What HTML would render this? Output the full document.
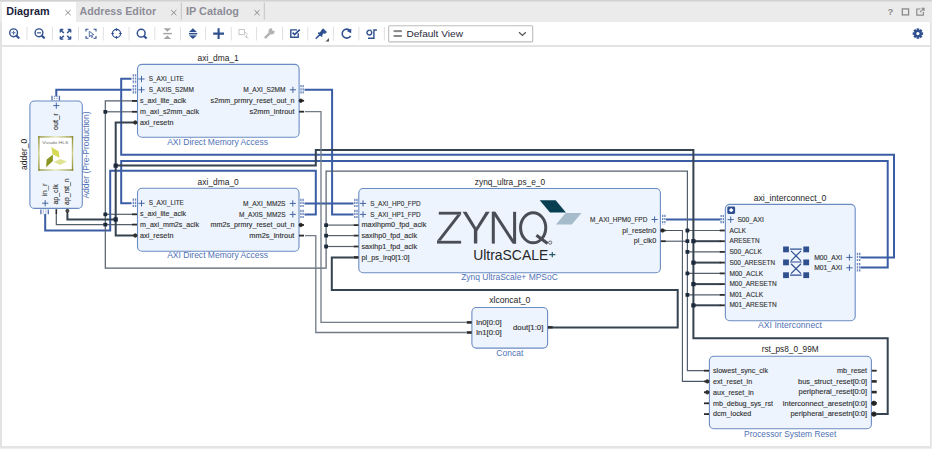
<!DOCTYPE html><html><head><meta charset="utf-8"><style>html,body{margin:0;padding:0;background:#fff;width:932px;height:449px;overflow:hidden}svg{display:block}text{font-family:"Liberation Sans",sans-serif;white-space:pre}</style></head><body>
<svg width="932" height="449" viewBox="0 0 932 449">
<rect x="0" y="0" width="932" height="449" fill="#e3e3e3"/>
<rect x="0" y="0" width="932" height="22" fill="#ebebeb"/>
<rect x="0" y="0" width="932" height="1.5" fill="#d2d2d2"/>
<rect x="2" y="2" width="74" height="20" fill="#ffffff"/>
<rect x="2" y="22" width="928" height="23" fill="#ffffff"/>
<rect x="2" y="47" width="928" height="399" fill="#ffffff"/>
<rect x="0" y="447.8" width="932" height="1.2" fill="#eeeeee"/><rect x="931.2" y="22" width="0.8" height="427" fill="#ececec"/>
<text x="6.30" y="14.70" font-size="10.20" fill="#1c1c3c" text-anchor="start" textLength="43.20" lengthAdjust="spacingAndGlyphs" font-weight="bold">Diagram</text>
<text x="79.50" y="14.70" font-size="10.20" fill="#8d8d98" text-anchor="start" textLength="76.60" lengthAdjust="spacingAndGlyphs" font-weight="bold">Address Editor</text>
<text x="186.00" y="14.70" font-size="10.20" fill="#8d8d98" text-anchor="start" textLength="53.00" lengthAdjust="spacingAndGlyphs" font-weight="bold">IP Catalog</text>
<path d="M65.4 10.0L70.6 15.2M70.6 10.0L65.4 15.2" stroke="#858585" stroke-width="0.95"/>
<path d="M171.20000000000002 10.0L176.4 15.2M176.4 10.0L171.20000000000002 15.2" stroke="#858585" stroke-width="0.95"/>
<path d="M254.4 10.0L259.6 15.2M259.6 10.0L254.4 15.2" stroke="#858585" stroke-width="0.95"/>
<rect x="180.8" y="2.5" width="1" height="17" fill="#c4c4c4"/>
<rect x="263.8" y="2.5" width="1" height="17" fill="#c4c4c4"/>
<text x="887.5" y="15.4" font-size="9.5" fill="#8a8a8a" font-weight="bold">?</text>
<rect x="902.3" y="8.9" width="6.3" height="6.0" fill="none" stroke="#8a8a8a" stroke-width="1.3"/>
<path d="M920.5 9H916.8V15.2H923.3V11.8" fill="none" stroke="#8a8a8a" stroke-width="1.2"/><path d="M920 12.2L924 8.4M921.5 8.3H924.1V10.9" fill="none" stroke="#8a8a8a" stroke-width="1.1"/>
<rect x="26.5" y="27" width="1" height="13.5" fill="#e0e0e0"/>
<rect x="51.9" y="27" width="1" height="13.5" fill="#e0e0e0"/>
<rect x="78.0" y="27" width="1" height="13.5" fill="#e0e0e0"/>
<rect x="102.8" y="27" width="1" height="13.5" fill="#e0e0e0"/>
<rect x="128.5" y="27" width="1" height="13.5" fill="#e0e0e0"/>
<rect x="154.3" y="27" width="1" height="13.5" fill="#e0e0e0"/>
<rect x="180.0" y="27" width="1" height="13.5" fill="#e0e0e0"/>
<rect x="205.1" y="27" width="1" height="13.5" fill="#e0e0e0"/>
<rect x="230.8" y="27" width="1" height="13.5" fill="#e0e0e0"/>
<rect x="256.1" y="27" width="1" height="13.5" fill="#e0e0e0"/>
<rect x="282.1" y="27" width="1" height="13.5" fill="#e0e0e0"/>
<rect x="307.3" y="27" width="1" height="13.5" fill="#e0e0e0"/>
<rect x="332.9" y="27" width="1" height="13.5" fill="#e0e0e0"/>
<rect x="358.4" y="27" width="1" height="13.5" fill="#e0e0e0"/>
<rect x="383.9" y="27" width="1" height="13.5" fill="#e0e0e0"/>
<g fill="none" stroke="#2f4f8f" stroke-width="1.4"><circle cx="13.6" cy="32.8" r="3.9"/><path d="M16.5 35.7L18.6 37.8" stroke-width="2.1" stroke-linecap="round"/><path d="M11.6 32.8H15.6M13.6 30.8V34.8" stroke-width="1.1" opacity="0.8"/></g>
<g fill="none" stroke="#2f4f8f" stroke-width="1.4"><circle cx="39.0" cy="32.8" r="3.9"/><path d="M41.9 35.7L44.0 37.8" stroke-width="2.1" stroke-linecap="round"/><path d="M37.0 32.8H41.0" stroke-width="1.4" opacity="0.8"/></g>
<g fill="none" stroke="#2f4f8f" stroke-width="1.5"><path d="M60.5 29.7L63.8 33M70.5 29.7L67.2 33M60.5 39L63.8 35.7M70.5 39L67.2 35.7"/><path d="M60.3 29.5h3M60.3 29.5v3M70.7 29.5h-3M70.7 29.5v3M60.3 39.2h3M60.3 39.2v-3M70.7 39.2h-3M70.7 39.2v-3" stroke-width="1.3"/></g>
<g fill="none" stroke="#2f4f8f" stroke-width="1.1"><path d="M86 31.5V29.3H88.5M93.5 29.3H96V31.5M86 36V38.3H88.5M93.5 38.3H96V36"/><path d="M89.3 31.3L93.8 34.7L91.6 35.1L92.6 37.1L91.6 37.5L90.7 35.5L89.3 36.8Z" stroke-width="0.8"/></g>
<g fill="none" stroke="#2f4f8f" stroke-width="1.2"><circle cx="116.5" cy="33.5" r="4.1"/><path d="M116.5 28.3V30.9M116.5 36.1V38.7M111.3 33.5H113.9M119.1 33.5H121.7"/></g>
<g fill="none" stroke="#2f4f8f" stroke-width="1.5"><circle cx="141.2" cy="33.2" r="3.9"/><path d="M144 36.0L146.6 38.6" stroke-width="2.1"/></g>
<g fill="#a4a4a4"><path d="M163.6 28.3H171.1L167.35 31.8Z"/><rect x="163.2" y="32.9" width="8.7" height="1.4"/><path d="M163.6 39.0H171.1L167.35 35.5Z"/></g>
<g fill="#2f4f8f"><path d="M189.0 31.9H196.8L192.9 28.3Z"/><rect x="188.9" y="32.9" width="8.3" height="1.4"/><path d="M189.0 35.6H196.8L192.9 39.1Z"/><rect x="189.2" y="34.5" width="7.7" height="0.9" opacity="0.45"/></g>
<path d="M213.2 33.6H224M218.6 28.3V38.9" stroke="#2f4f8f" stroke-width="2.1"/>
<g fill="none" stroke="#c8c8c8" stroke-width="1"><rect x="239" y="29.5" width="5.5" height="5.2"/><path d="M245 32L247.8 34.6M246.5 35V37.8M245 36.5L248.5 38.3"/></g>
<g><path d="M265.6 37.3L270.6 32.3" stroke="#b4b4b4" stroke-width="2.6" stroke-linecap="round"/><circle cx="271.6" cy="31.3" r="3.1" fill="#b4b4b4"/><circle cx="273.7" cy="29.2" r="1.7" fill="#fff"/></g>
<g fill="none" stroke="#2f4f8f" stroke-width="1.4"><path d="M298.2 33.2V37.3H290.8V29.9H297"/><path d="M292.6 32.6L294.6 34.5L299.8 29.6" stroke-width="1.7"/></g>
<g fill="#2f4f8f" stroke="#2f4f8f"><path d="M316.2 38.2L320.2 34.4" stroke-width="1.5" stroke-linecap="round"/><path d="M318.3 32.6L322.2 36.5" stroke-width="1.6"/><path d="M319.6 33.6L322.2 31.2L323.5 32.4L321.1 35Z" stroke-width="1.6"/><path d="M321.6 30.3L323.1 28.8L326.4 32.1L324.9 33.6Z" stroke-width="1"/></g><path d="M329 37.9V41.5H325.4Z" fill="#555"/>
<g fill="none" stroke="#2f4f8f" stroke-width="1.6"><path d="M350.2 30.8A4.5 4.5 0 1 0 350.6 35.9"/></g><path d="M346.8 30.9L351.3 28.8L351.2 33.3Z" fill="#2f4f8f"/>
<g fill="none" stroke="#2f4f8f" stroke-width="1.4"><path d="M371.3 31.2A2.4 2.4 0 1 1 369.6 30.2"/><path d="M376.9 30H373.9V38.2H368" /></g><path d="M369 30.6L371.2 29.3L371.6 31.8Z" fill="#2f4f8f"/>
<rect x="388.7" y="25.7" width="144.0" height="16.2" rx="1" fill="#fff" stroke="#bdbdbd" stroke-width="1.1"/>
<g fill="#8a8a8a"><rect x="393.6" y="30.1" width="8.3" height="2.0"/><rect x="393.6" y="35.0" width="8.3" height="2.0"/></g>
<text x="406.4" y="36.8" font-size="9.5" fill="#2a2a3a" textLength="56.6" lengthAdjust="spacingAndGlyphs">Default View</text>
<path d="M519 32.2L522.4 35.4L525.8 32.2" fill="none" stroke="#555" stroke-width="1.3"/>
<g transform="translate(917.9 33.6)"><circle r="3.6" fill="#2f4f8f"/><g fill="#2f4f8f"><rect x="-1.3" y="-5.2" width="2.6" height="2.6" transform="rotate(0)"/><rect x="-1.3" y="-5.2" width="2.6" height="2.6" transform="rotate(45)"/><rect x="-1.3" y="-5.2" width="2.6" height="2.6" transform="rotate(90)"/><rect x="-1.3" y="-5.2" width="2.6" height="2.6" transform="rotate(135)"/><rect x="-1.3" y="-5.2" width="2.6" height="2.6" transform="rotate(180)"/><rect x="-1.3" y="-5.2" width="2.6" height="2.6" transform="rotate(225)"/><rect x="-1.3" y="-5.2" width="2.6" height="2.6" transform="rotate(270)"/><rect x="-1.3" y="-5.2" width="2.6" height="2.6" transform="rotate(315)"/></g><circle r="1.6" fill="#fff"/></g>
<path d="M56.30 96.50 L56.30 89.80 L131.50 89.80" stroke="#3a5da6" stroke-width="2.0" fill="none" stroke-linejoin="miter" stroke-linecap="butt"/>
<path d="M860.50 257.60 L894.00 257.60 L894.00 154.80 L121.20 154.80 L121.20 78.70 L131.50 78.70" stroke="#3a5da6" stroke-width="2.0" fill="none" stroke-linejoin="miter" stroke-linecap="butt"/>
<path d="M860.50 267.60 L887.70 267.60 L887.70 161.00 L121.20 161.00 L121.20 203.30 L131.50 203.30" stroke="#3a5da6" stroke-width="2.0" fill="none" stroke-linejoin="miter" stroke-linecap="butt"/>
<path d="M304.50 214.40 L315.80 214.40 L315.80 170.80 L110.20 170.80 L110.20 230.40 L45.20 230.40 L45.20 214.00" stroke="#3a5da6" stroke-width="2.0" fill="none" stroke-linejoin="miter" stroke-linecap="butt"/>
<path d="M304.50 89.80 L332.10 89.80 L332.10 214.40 L353.50 214.40" stroke="#3a5da6" stroke-width="2.0" fill="none" stroke-linejoin="miter" stroke-linecap="butt"/>
<path d="M304.50 203.40 L353.50 203.40" stroke="#3a5da6" stroke-width="2.0" fill="none" stroke-linejoin="miter" stroke-linecap="butt"/>
<path d="M666.00 219.50 L720.50 219.50" stroke="#3a5da6" stroke-width="2.0" fill="none" stroke-linejoin="miter" stroke-linecap="butt"/>
<path d="M137.00 100.90 L105.30 100.90 L105.30 268.20 L326.10 268.20 L326.10 171.20 L687.40 171.20 L687.40 370.70 L704.00 370.70" stroke="#55606c" stroke-width="1.2" fill="none" stroke-linejoin="miter" stroke-linecap="butt"/>
<path d="M105.30 111.80 L132.00 111.80" stroke="#55606c" stroke-width="1.2" fill="none" stroke-linejoin="miter" stroke-linecap="butt"/>
<path d="M105.30 214.30 L132.00 214.30" stroke="#55606c" stroke-width="1.2" fill="none" stroke-linejoin="miter" stroke-linecap="butt"/>
<path d="M56.30 214.00 L56.30 224.60 L132.00 224.60" stroke="#55606c" stroke-width="1.2" fill="none" stroke-linejoin="miter" stroke-linecap="butt"/>
<path d="M326.10 225.10 L353.50 225.10" stroke="#55606c" stroke-width="1.2" fill="none" stroke-linejoin="miter" stroke-linecap="butt"/>
<path d="M326.10 235.60 L353.50 235.60" stroke="#55606c" stroke-width="1.2" fill="none" stroke-linejoin="miter" stroke-linecap="butt"/>
<path d="M326.10 246.50 L353.50 246.50" stroke="#55606c" stroke-width="1.2" fill="none" stroke-linejoin="miter" stroke-linecap="butt"/>
<path d="M687.40 230.50 L720.70 230.50" stroke="#55606c" stroke-width="1.2" fill="none" stroke-linejoin="miter" stroke-linecap="butt"/>
<path d="M687.40 251.90 L720.70 251.90" stroke="#55606c" stroke-width="1.2" fill="none" stroke-linejoin="miter" stroke-linecap="butt"/>
<path d="M687.40 273.40 L720.70 273.40" stroke="#55606c" stroke-width="1.2" fill="none" stroke-linejoin="miter" stroke-linecap="butt"/>
<path d="M687.40 294.90 L720.70 294.90" stroke="#55606c" stroke-width="1.2" fill="none" stroke-linejoin="miter" stroke-linecap="butt"/>
<path d="M665.50 241.20 L687.40 241.20" stroke="#4a5666" stroke-width="1.1" fill="none" stroke-linejoin="miter" stroke-linecap="butt"/>
<path d="M665.50 230.50 L682.40 230.50 L682.40 381.40 L704.00 381.40" stroke="#4a5666" stroke-width="1.1" fill="none" stroke-linejoin="miter" stroke-linecap="butt"/>
<path d="M132.00 122.50 L115.70 122.50 L115.70 235.50 L132.00 235.50" stroke="#35424f" stroke-width="2.0" fill="none" stroke-linejoin="miter" stroke-linecap="butt"/>
<path d="M67.40 214.00 L67.40 219.50 L115.70 219.50" stroke="#35424f" stroke-width="2.0" fill="none" stroke-linejoin="miter" stroke-linecap="butt"/>
<path d="M115.70 165.60 L315.80 165.60 L315.80 150.00 L693.40 150.00 L693.40 338.30 L887.70 338.30 L887.70 414.10 L877.00 414.10" stroke="#35424f" stroke-width="2.0" fill="none" stroke-linejoin="miter" stroke-linecap="butt"/>
<path d="M693.40 241.20 L720.70 241.20" stroke="#35424f" stroke-width="2.0" fill="none" stroke-linejoin="miter" stroke-linecap="butt"/>
<path d="M693.40 262.60 L720.70 262.60" stroke="#35424f" stroke-width="2.0" fill="none" stroke-linejoin="miter" stroke-linecap="butt"/>
<path d="M693.40 284.10 L720.70 284.10" stroke="#35424f" stroke-width="2.0" fill="none" stroke-linejoin="miter" stroke-linecap="butt"/>
<path d="M693.40 305.30 L720.70 305.30" stroke="#35424f" stroke-width="2.0" fill="none" stroke-linejoin="miter" stroke-linecap="butt"/>
<path d="M305.00 111.70 L321.00 111.70 L321.00 322.40 L466.50 322.40" stroke="#727b86" stroke-width="1.3" fill="none" stroke-linejoin="miter" stroke-linecap="butt"/>
<path d="M305.00 235.60 L315.80 235.60 L315.80 332.50 L466.50 332.50" stroke="#727b86" stroke-width="1.3" fill="none" stroke-linejoin="miter" stroke-linecap="butt"/>
<path d="M553.00 327.40 L677.70 327.40 L677.70 289.90 L331.80 289.90 L331.80 257.40 L353.50 257.40" stroke="#35424f" stroke-width="2.0" fill="none" stroke-linejoin="miter" stroke-linecap="butt"/>
<rect x="103.40" y="109.90" width="3.8" height="3.8" rx="0.6" fill="#1c2a3c"/>
<rect x="103.40" y="212.40" width="3.8" height="3.8" rx="0.6" fill="#1c2a3c"/>
<rect x="103.40" y="222.70" width="3.8" height="3.8" rx="0.6" fill="#1c2a3c"/>
<rect x="324.20" y="223.20" width="3.8" height="3.8" rx="0.6" fill="#1c2a3c"/>
<rect x="324.20" y="233.70" width="3.8" height="3.8" rx="0.6" fill="#1c2a3c"/>
<rect x="324.20" y="244.60" width="3.8" height="3.8" rx="0.6" fill="#1c2a3c"/>
<rect x="685.50" y="228.60" width="3.8" height="3.8" rx="0.6" fill="#1c2a3c"/>
<rect x="685.50" y="239.30" width="3.8" height="3.8" rx="0.6" fill="#1c2a3c"/>
<rect x="685.50" y="250.00" width="3.8" height="3.8" rx="0.6" fill="#1c2a3c"/>
<rect x="685.50" y="271.50" width="3.8" height="3.8" rx="0.6" fill="#1c2a3c"/>
<rect x="685.50" y="293.00" width="3.8" height="3.8" rx="0.6" fill="#1c2a3c"/>
<rect x="113.55" y="163.45" width="4.3" height="4.3" rx="0.6" fill="#1c2a3c"/>
<rect x="113.55" y="217.35" width="4.3" height="4.3" rx="0.6" fill="#1c2a3c"/>
<rect x="691.25" y="239.05" width="4.3" height="4.3" rx="0.6" fill="#1c2a3c"/>
<rect x="691.25" y="260.45" width="4.3" height="4.3" rx="0.6" fill="#1c2a3c"/>
<rect x="691.25" y="281.95" width="4.3" height="4.3" rx="0.6" fill="#1c2a3c"/>
<rect x="691.25" y="303.15" width="4.3" height="4.3" rx="0.6" fill="#1c2a3c"/>
<rect x="137.50" y="64.40" width="161.60" height="72.80" rx="4.5" ry="4.5" fill="#edf4fd" stroke="#6b8cc3" stroke-width="1.1"/>
<text x="218.20" y="60.90" font-size="8.16" fill="#1e1e1e" text-anchor="middle" textLength="41.12" lengthAdjust="spacingAndGlyphs" font-weight="normal">axi_dma_1</text>
<text x="217.60" y="144.90" font-size="8.16" fill="#4f72b6" text-anchor="middle" textLength="100.89" lengthAdjust="spacingAndGlyphs" font-weight="normal">AXI Direct Memory Access</text>
<path d="M138.40 79.00H144.60M141.50 75.90V82.10" stroke="#3d5e9d" stroke-width="0.95" fill="none"/>
<path d="M133.30 74.30V83.70" stroke="#4d6fae" stroke-width="1.4" stroke-dasharray="2.2 0.9" opacity="0.8"/>
<path d="M135.50 74.30V83.70" stroke="#4d6fae" stroke-width="1.4" stroke-dasharray="2.2 0.9" opacity="0.8"/>
<text x="148.80" y="81.10" font-size="6.89" fill="#303030" text-anchor="start" textLength="35.06" lengthAdjust="spacingAndGlyphs" font-weight="normal" stroke="#303030" stroke-width="0.12">S_AXI_LITE</text>
<path d="M138.40 89.80H144.60M141.50 86.70V92.90" stroke="#3d5e9d" stroke-width="0.95" fill="none"/>
<path d="M133.30 85.10V94.50" stroke="#4d6fae" stroke-width="1.4" stroke-dasharray="2.2 0.9" opacity="0.8"/>
<path d="M135.50 85.10V94.50" stroke="#4d6fae" stroke-width="1.4" stroke-dasharray="2.2 0.9" opacity="0.8"/>
<text x="148.80" y="91.90" font-size="6.89" fill="#303030" text-anchor="start" textLength="45.05" lengthAdjust="spacingAndGlyphs" font-weight="normal" stroke="#303030" stroke-width="0.12">S_AXIS_S2MM</text>
<path d="M132.00 100.90H137.00" stroke="#2a2a2a" stroke-width="1.8"/>
<text x="140.00" y="103.00" font-size="6.89" fill="#303030" text-anchor="start" textLength="46.06" lengthAdjust="spacingAndGlyphs" font-weight="normal" stroke="#303030" stroke-width="0.12">s_axi_lite_aclk</text>
<path d="M132.00 111.80H137.00" stroke="#2a2a2a" stroke-width="1.8"/>
<text x="140.00" y="113.90" font-size="6.89" fill="#303030" text-anchor="start" textLength="59.03" lengthAdjust="spacingAndGlyphs" font-weight="normal" stroke="#303030" stroke-width="0.12">m_axi_s2mm_aclk</text>
<path d="M132.00 122.50H137.00" stroke="#2a2a2a" stroke-width="1.8"/>
<circle cx="135.30" cy="122.50" r="1.7" fill="#333" stroke="#2a2a2a" stroke-width="0.9"/>
<text x="140.00" y="124.60" font-size="6.89" fill="#303030" text-anchor="start" textLength="33.47" lengthAdjust="spacingAndGlyphs" font-weight="normal" stroke="#303030" stroke-width="0.12">axi_resetn</text>
<path d="M289.80 89.80H296.00M292.90 86.70V92.90" stroke="#3d5e9d" stroke-width="0.95" fill="none"/>
<path d="M301.00 85.10V94.50" stroke="#4d6fae" stroke-width="1.4" stroke-dasharray="2.2 0.9" opacity="0.8"/>
<path d="M303.20 85.10V94.50" stroke="#4d6fae" stroke-width="1.4" stroke-dasharray="2.2 0.9" opacity="0.8"/>
<text x="285.60" y="91.90" font-size="6.89" fill="#303030" text-anchor="end" textLength="42.40" lengthAdjust="spacingAndGlyphs" font-weight="normal" stroke="#303030" stroke-width="0.12">M_AXI_S2MM</text>
<path d="M299.10 100.70H304.10" stroke="#2a2a2a" stroke-width="1.8"/>
<circle cx="300.80" cy="100.70" r="1.7" fill="#222" stroke="#2a2a2a" stroke-width="0.9"/>
<text x="294.50" y="102.80" font-size="6.89" fill="#303030" text-anchor="end" textLength="83.95" lengthAdjust="spacingAndGlyphs" font-weight="normal" stroke="#303030" stroke-width="0.12">s2mm_prmry_reset_out_n</text>
<path d="M299.10 111.70H304.10" stroke="#2a2a2a" stroke-width="1.8"/>
<text x="294.50" y="113.80" font-size="6.89" fill="#303030" text-anchor="end" textLength="45.08" lengthAdjust="spacingAndGlyphs" font-weight="normal" stroke="#303030" stroke-width="0.12">s2mm_introut</text>
<rect x="137.50" y="188.30" width="161.50" height="63.00" rx="4.5" ry="4.5" fill="#edf4fd" stroke="#6b8cc3" stroke-width="1.1"/>
<text x="218.20" y="185.30" font-size="8.16" fill="#1e1e1e" text-anchor="middle" textLength="41.12" lengthAdjust="spacingAndGlyphs" font-weight="normal">axi_dma_0</text>
<text x="217.60" y="258.30" font-size="8.16" fill="#4f72b6" text-anchor="middle" textLength="100.89" lengthAdjust="spacingAndGlyphs" font-weight="normal">AXI Direct Memory Access</text>
<path d="M138.40 203.30H144.60M141.50 200.20V206.40" stroke="#3d5e9d" stroke-width="0.95" fill="none"/>
<path d="M133.30 198.60V208.00" stroke="#4d6fae" stroke-width="1.4" stroke-dasharray="2.2 0.9" opacity="0.8"/>
<path d="M135.50 198.60V208.00" stroke="#4d6fae" stroke-width="1.4" stroke-dasharray="2.2 0.9" opacity="0.8"/>
<text x="148.80" y="205.40" font-size="6.89" fill="#303030" text-anchor="start" textLength="35.06" lengthAdjust="spacingAndGlyphs" font-weight="normal" stroke="#303030" stroke-width="0.12">S_AXI_LITE</text>
<path d="M132.00 214.30H137.00" stroke="#2a2a2a" stroke-width="1.8"/>
<text x="140.00" y="216.40" font-size="6.89" fill="#303030" text-anchor="start" textLength="46.06" lengthAdjust="spacingAndGlyphs" font-weight="normal" stroke="#303030" stroke-width="0.12">s_axi_lite_aclk</text>
<path d="M132.00 224.60H137.00" stroke="#2a2a2a" stroke-width="1.8"/>
<text x="140.00" y="226.70" font-size="6.89" fill="#303030" text-anchor="start" textLength="59.03" lengthAdjust="spacingAndGlyphs" font-weight="normal" stroke="#303030" stroke-width="0.12">m_axi_mm2s_aclk</text>
<path d="M132.00 235.50H137.00" stroke="#2a2a2a" stroke-width="1.8"/>
<circle cx="135.30" cy="235.50" r="1.7" fill="#333" stroke="#2a2a2a" stroke-width="0.9"/>
<text x="140.00" y="237.60" font-size="6.89" fill="#303030" text-anchor="start" textLength="33.47" lengthAdjust="spacingAndGlyphs" font-weight="normal" stroke="#303030" stroke-width="0.12">axi_resetn</text>
<path d="M289.70 203.40H295.90M292.80 200.30V206.50" stroke="#3d5e9d" stroke-width="0.95" fill="none"/>
<path d="M300.90 198.70V208.10" stroke="#4d6fae" stroke-width="1.4" stroke-dasharray="2.2 0.9" opacity="0.8"/>
<path d="M303.10 198.70V208.10" stroke="#4d6fae" stroke-width="1.4" stroke-dasharray="2.2 0.9" opacity="0.8"/>
<text x="285.50" y="205.50" font-size="6.89" fill="#303030" text-anchor="end" textLength="42.40" lengthAdjust="spacingAndGlyphs" font-weight="normal" stroke="#303030" stroke-width="0.12">M_AXI_MM2S</text>
<path d="M289.70 214.40H295.90M292.80 211.30V217.50" stroke="#3d5e9d" stroke-width="0.95" fill="none"/>
<path d="M300.90 209.70V219.10" stroke="#4d6fae" stroke-width="1.4" stroke-dasharray="2.2 0.9" opacity="0.8"/>
<path d="M303.10 209.70V219.10" stroke="#4d6fae" stroke-width="1.4" stroke-dasharray="2.2 0.9" opacity="0.8"/>
<text x="285.50" y="216.50" font-size="6.89" fill="#303030" text-anchor="end" textLength="46.53" lengthAdjust="spacingAndGlyphs" font-weight="normal" stroke="#303030" stroke-width="0.12">M_AXIS_MM2S</text>
<path d="M299.00 225.00H304.00" stroke="#2a2a2a" stroke-width="1.8"/>
<circle cx="300.70" cy="225.00" r="1.7" fill="#222" stroke="#2a2a2a" stroke-width="0.9"/>
<text x="294.40" y="227.10" font-size="6.89" fill="#303030" text-anchor="end" textLength="83.95" lengthAdjust="spacingAndGlyphs" font-weight="normal" stroke="#303030" stroke-width="0.12">mm2s_prmry_reset_out_n</text>
<path d="M299.00 235.60H304.00" stroke="#2a2a2a" stroke-width="1.8"/>
<text x="294.40" y="237.70" font-size="6.89" fill="#303030" text-anchor="end" textLength="45.08" lengthAdjust="spacingAndGlyphs" font-weight="normal" stroke="#303030" stroke-width="0.12">mm2s_introut</text>
<rect x="358.80" y="188.50" width="301.60" height="84.30" rx="4.5" ry="4.5" fill="#edf4fd" stroke="#6b8cc3" stroke-width="1.1"/>
<text x="510.00" y="185.00" font-size="8.16" fill="#1e1e1e" text-anchor="middle" textLength="70.23" lengthAdjust="spacingAndGlyphs" font-weight="normal">zynq_ultra_ps_e_0</text>
<text x="509.50" y="280.00" font-size="8.16" fill="#4f72b6" text-anchor="middle" textLength="96.60" lengthAdjust="spacingAndGlyphs" font-weight="normal">Zynq UltraScale+ MPSoC</text>
<path d="M359.90 203.40H366.10M363.00 200.30V206.50" stroke="#3d5e9d" stroke-width="0.95" fill="none"/>
<path d="M354.80 198.70V208.10" stroke="#4d6fae" stroke-width="1.4" stroke-dasharray="2.2 0.9" opacity="0.8"/>
<path d="M357.00 198.70V208.10" stroke="#4d6fae" stroke-width="1.4" stroke-dasharray="2.2 0.9" opacity="0.8"/>
<text x="370.30" y="205.50" font-size="6.89" fill="#303030" text-anchor="start" textLength="50.30" lengthAdjust="spacingAndGlyphs" font-weight="normal" stroke="#303030" stroke-width="0.12">S_AXI_HP0_FPD</text>
<path d="M359.90 214.40H366.10M363.00 211.30V217.50" stroke="#3d5e9d" stroke-width="0.95" fill="none"/>
<path d="M354.80 209.70V219.10" stroke="#4d6fae" stroke-width="1.4" stroke-dasharray="2.2 0.9" opacity="0.8"/>
<path d="M357.00 209.70V219.10" stroke="#4d6fae" stroke-width="1.4" stroke-dasharray="2.2 0.9" opacity="0.8"/>
<text x="370.30" y="216.50" font-size="6.89" fill="#303030" text-anchor="start" textLength="50.30" lengthAdjust="spacingAndGlyphs" font-weight="normal" stroke="#303030" stroke-width="0.12">S_AXI_HP1_FPD</text>
<path d="M353.50 225.10H358.50" stroke="#2a2a2a" stroke-width="1.8"/>
<text x="361.50" y="227.20" font-size="6.89" fill="#303030" text-anchor="start" textLength="64.85" lengthAdjust="spacingAndGlyphs" font-weight="normal" stroke="#303030" stroke-width="0.12">maxihpm0_fpd_aclk</text>
<path d="M353.50 235.60H358.50" stroke="#2a2a2a" stroke-width="1.8"/>
<text x="361.50" y="237.70" font-size="6.89" fill="#303030" text-anchor="start" textLength="55.57" lengthAdjust="spacingAndGlyphs" font-weight="normal" stroke="#303030" stroke-width="0.12">saxihp0_fpd_aclk</text>
<path d="M353.50 246.50H358.50" stroke="#2a2a2a" stroke-width="1.8"/>
<text x="361.50" y="248.60" font-size="6.89" fill="#303030" text-anchor="start" textLength="55.57" lengthAdjust="spacingAndGlyphs" font-weight="normal" stroke="#303030" stroke-width="0.12">saxihp1_fpd_aclk</text>
<path d="M353.50 257.40H358.50" stroke="#2a2a2a" stroke-width="2.6"/>
<text x="361.50" y="259.50" font-size="6.89" fill="#303030" text-anchor="start" textLength="48.10" lengthAdjust="spacingAndGlyphs" font-weight="normal" stroke="#303030" stroke-width="0.12">pl_ps_irq0[1:0]</text>
<path d="M651.50 219.50H657.70M654.60 216.40V222.60" stroke="#3d5e9d" stroke-width="0.95" fill="none"/>
<path d="M662.70 214.80V224.20" stroke="#4d6fae" stroke-width="1.4" stroke-dasharray="2.2 0.9" opacity="0.8"/>
<path d="M664.90 214.80V224.20" stroke="#4d6fae" stroke-width="1.4" stroke-dasharray="2.2 0.9" opacity="0.8"/>
<text x="647.30" y="221.60" font-size="6.89" fill="#303030" text-anchor="end" textLength="57.39" lengthAdjust="spacingAndGlyphs" font-weight="normal" stroke="#303030" stroke-width="0.12">M_AXI_HPM0_FPD</text>
<path d="M660.80 230.50H665.80" stroke="#2a2a2a" stroke-width="1.8"/>
<circle cx="662.50" cy="230.50" r="1.7" fill="#222" stroke="#2a2a2a" stroke-width="0.9"/>
<text x="656.20" y="232.60" font-size="6.89" fill="#303030" text-anchor="end" textLength="33.90" lengthAdjust="spacingAndGlyphs" font-weight="normal" stroke="#303030" stroke-width="0.12">pl_resetn0</text>
<path d="M660.80 241.20H665.80" stroke="#2a2a2a" stroke-width="1.8"/>
<text x="656.20" y="243.30" font-size="6.89" fill="#303030" text-anchor="end" textLength="22.46" lengthAdjust="spacingAndGlyphs" font-weight="normal" stroke="#303030" stroke-width="0.12">pl_clk0</text>
<g fill="#4a4d55">
<rect x="438.8" y="211.8" width="22.3" height="2.8"/><rect x="437" y="240.8" width="24.1" height="2.8"/><path d="M457.4 214.6H461.1L440.7 240.8H437Z"/>
<path d="M462.6 211.8H466.5L477.3 229.6V243.6H473.9V229.6Z"/><path d="M485.8 211.8H489.7L477.3 231H473.9Z"/>
<rect x="491.8" y="211.8" width="3" height="31.8"/><rect x="513.1" y="211.8" width="3" height="31.8"/><path d="M491.8 211.8H495.4L516.1 243.6H512.5Z"/>
</g>
<ellipse cx="533.15" cy="227.75" rx="12.6" ry="15.05" fill="none" stroke="#4a4d55" stroke-width="3"/>
<path d="M536.4 235.3L547.6 243.4" stroke="#4a4d55" stroke-width="3.1"/>
<circle cx="550.2" cy="242.6" r="1.6" fill="none" stroke="#4a4d55" stroke-width="0.8"/>
<path d="M539.7 200.3L555.7 200.3L565.9 212.6L550.0 212.6Z" fill="#073f50"/>
<path d="M565.6 213.0L581.5 213.0L571.8 224.6L556.0 224.6Z" fill="#a7bccb"/>
<text x="473.2" y="260.4" font-size="15" fill="#262628" textLength="75" lengthAdjust="spacingAndGlyphs">UltraSCALE</text>
<path d="M549.2 254.6H555.4M552.3 251.9V257.3" stroke="#2a5a6a" stroke-width="1.2"/>
<rect x="471.90" y="307.50" width="75.70" height="40.60" rx="4.5" ry="4.5" fill="#edf4fd" stroke="#6b8cc3" stroke-width="1.1"/>
<text x="509.80" y="303.30" font-size="8.16" fill="#1e1e1e" text-anchor="middle" textLength="41.24" lengthAdjust="spacingAndGlyphs" font-weight="normal">xlconcat_0</text>
<text x="509.80" y="356.00" font-size="8.16" fill="#4f72b6" text-anchor="middle" textLength="26.94" lengthAdjust="spacingAndGlyphs" font-weight="normal">Concat</text>
<path d="M466.70 322.40H471.70" stroke="#2a2a2a" stroke-width="2.6"/>
<text x="475.90" y="324.50" font-size="6.89" fill="#303030" text-anchor="start" textLength="25.71" lengthAdjust="spacingAndGlyphs" font-weight="normal" stroke="#303030" stroke-width="0.12">In0[0:0]</text>
<path d="M466.70 332.50H471.70" stroke="#2a2a2a" stroke-width="2.6"/>
<text x="475.90" y="334.60" font-size="6.89" fill="#303030" text-anchor="start" textLength="25.71" lengthAdjust="spacingAndGlyphs" font-weight="normal" stroke="#303030" stroke-width="0.12">In1[0:0]</text>
<path d="M547.90 327.40H552.90" stroke="#2a2a2a" stroke-width="2.6"/>
<text x="543.30" y="329.50" font-size="6.89" fill="#303030" text-anchor="end" textLength="30.30" lengthAdjust="spacingAndGlyphs" font-weight="normal" stroke="#303030" stroke-width="0.12">dout[1:0]</text>
<rect x="725.35" y="204.35" width="129.85" height="116.35" rx="4.5" ry="4.5" fill="#edf4fd" stroke="#6b8cc3" stroke-width="1.1"/>
<text x="790.00" y="201.00" font-size="8.16" fill="#1e1e1e" text-anchor="middle" textLength="72.48" lengthAdjust="spacingAndGlyphs" font-weight="normal">axi_interconnect_0</text>
<text x="790.00" y="327.50" font-size="8.16" fill="#4f72b6" text-anchor="middle" textLength="63.86" lengthAdjust="spacingAndGlyphs" font-weight="normal">AXI Interconnect</text>
<path d="M727.60 219.60H733.80M730.70 216.50V222.70" stroke="#3d5e9d" stroke-width="0.95" fill="none"/>
<path d="M721.10 214.90V224.30" stroke="#4d6fae" stroke-width="1.4" stroke-dasharray="2.2 0.9" opacity="0.8"/>
<path d="M723.30 214.90V224.30" stroke="#4d6fae" stroke-width="1.4" stroke-dasharray="2.2 0.9" opacity="0.8"/>
<text x="737.40" y="221.70" font-size="6.89" fill="#303030" text-anchor="start" textLength="26.46" lengthAdjust="spacingAndGlyphs" font-weight="normal" stroke="#303030" stroke-width="0.12">S00_AXI</text>
<path d="M719.80 230.50H724.80" stroke="#2a2a2a" stroke-width="1.8"/>
<text x="729.40" y="232.60" font-size="6.89" fill="#303030" text-anchor="start" textLength="16.76" lengthAdjust="spacingAndGlyphs" font-weight="normal" stroke="#303030" stroke-width="0.12">ACLK</text>
<path d="M719.80 241.20H724.80" stroke="#2a2a2a" stroke-width="1.8"/>
<text x="729.40" y="243.30" font-size="6.89" fill="#303030" text-anchor="start" textLength="30.14" lengthAdjust="spacingAndGlyphs" font-weight="normal" stroke="#303030" stroke-width="0.12">ARESETN</text>
<path d="M719.80 251.90H724.80" stroke="#2a2a2a" stroke-width="1.8"/>
<text x="729.40" y="254.00" font-size="6.89" fill="#303030" text-anchor="start" textLength="32.40" lengthAdjust="spacingAndGlyphs" font-weight="normal" stroke="#303030" stroke-width="0.12">S00_ACLK</text>
<path d="M719.80 262.60H724.80" stroke="#2a2a2a" stroke-width="1.8"/>
<text x="729.40" y="264.70" font-size="6.89" fill="#303030" text-anchor="start" textLength="45.78" lengthAdjust="spacingAndGlyphs" font-weight="normal" stroke="#303030" stroke-width="0.12">S00_ARESETN</text>
<path d="M719.80 273.40H724.80" stroke="#2a2a2a" stroke-width="1.8"/>
<text x="729.40" y="275.50" font-size="6.89" fill="#303030" text-anchor="start" textLength="33.89" lengthAdjust="spacingAndGlyphs" font-weight="normal" stroke="#303030" stroke-width="0.12">M00_ACLK</text>
<path d="M719.80 284.10H724.80" stroke="#2a2a2a" stroke-width="1.8"/>
<text x="729.40" y="286.20" font-size="6.89" fill="#303030" text-anchor="start" textLength="47.27" lengthAdjust="spacingAndGlyphs" font-weight="normal" stroke="#303030" stroke-width="0.12">M00_ARESETN</text>
<path d="M719.80 294.90H724.80" stroke="#2a2a2a" stroke-width="1.8"/>
<text x="729.40" y="297.00" font-size="6.89" fill="#303030" text-anchor="start" textLength="33.89" lengthAdjust="spacingAndGlyphs" font-weight="normal" stroke="#303030" stroke-width="0.12">M01_ACLK</text>
<path d="M719.80 305.30H724.80" stroke="#2a2a2a" stroke-width="1.8"/>
<text x="729.40" y="307.40" font-size="6.89" fill="#303030" text-anchor="start" textLength="47.27" lengthAdjust="spacingAndGlyphs" font-weight="normal" stroke="#303030" stroke-width="0.12">M01_ARESETN</text>
<path d="M846.30 257.40H852.50M849.40 254.30V260.50" stroke="#3d5e9d" stroke-width="0.95" fill="none"/>
<path d="M857.50 252.70V262.10" stroke="#4d6fae" stroke-width="1.4" stroke-dasharray="2.2 0.9" opacity="0.8"/>
<path d="M859.70 252.70V262.10" stroke="#4d6fae" stroke-width="1.4" stroke-dasharray="2.2 0.9" opacity="0.8"/>
<text x="842.10" y="259.50" font-size="6.89" fill="#303030" text-anchor="end" textLength="27.95" lengthAdjust="spacingAndGlyphs" font-weight="normal" stroke="#303030" stroke-width="0.12">M00_AXI</text>
<path d="M846.30 267.80H852.50M849.40 264.70V270.90" stroke="#3d5e9d" stroke-width="0.95" fill="none"/>
<path d="M857.50 263.10V272.50" stroke="#4d6fae" stroke-width="1.4" stroke-dasharray="2.2 0.9" opacity="0.8"/>
<path d="M859.70 263.10V272.50" stroke="#4d6fae" stroke-width="1.4" stroke-dasharray="2.2 0.9" opacity="0.8"/>
<text x="842.10" y="269.90" font-size="6.89" fill="#303030" text-anchor="end" textLength="27.95" lengthAdjust="spacingAndGlyphs" font-weight="normal" stroke="#303030" stroke-width="0.12">M01_AXI</text>
<rect x="727.3" y="206.5" width="7.8" height="7.4" rx="1.3" fill="#2f4f8f"/><path d="M729.3 210.2H733.1M731.2 208.3V212.1" stroke="#fff" stroke-width="1.7"/>
<rect x="783.1" y="246.5" width="5.8" height="5.8" fill="#2f4f8f"/>
<rect x="803.3" y="246.5" width="5.8" height="5.8" fill="#2f4f8f"/>
<rect x="783.1" y="259.5" width="5.8" height="5.8" fill="#2f4f8f"/>
<rect x="803.3" y="259.5" width="5.8" height="5.8" fill="#2f4f8f"/>
<rect x="783.1" y="272.3" width="5.8" height="5.8" fill="#2f4f8f"/>
<rect x="803.3" y="272.3" width="5.8" height="5.8" fill="#2f4f8f"/>
<path d="M790 249.2H801.7M790 262H801.7M790 275.2H801.7M791 250.8L801 260.8M801 250.8L791 260.8M791 263.8L801 273.6M801 263.8L791 273.6" stroke="#2f4f8f" stroke-width="1.2" fill="none"/>
<rect x="709.40" y="356.20" width="162.00" height="72.60" rx="4.5" ry="4.5" fill="#edf4fd" stroke="#6b8cc3" stroke-width="1.1"/>
<text x="790.20" y="351.70" font-size="8.16" fill="#1e1e1e" text-anchor="middle" textLength="56.88" lengthAdjust="spacingAndGlyphs" font-weight="normal">rst_ps8_0_99M</text>
<text x="790.20" y="437.00" font-size="8.16" fill="#4f72b6" text-anchor="middle" textLength="92.21" lengthAdjust="spacingAndGlyphs" font-weight="normal">Processor System Reset</text>
<path d="M704.00 370.70H709.00" stroke="#2a2a2a" stroke-width="1.8"/>
<text x="713.00" y="373.00" font-size="6.89" fill="#303030" text-anchor="start" textLength="54.99" lengthAdjust="spacingAndGlyphs" font-weight="normal" stroke="#303030" stroke-width="0.12">slowest_sync_clk</text>
<path d="M704.00 381.40H709.00" stroke="#2a2a2a" stroke-width="1.8"/>
<circle cx="707.30" cy="381.40" r="1.7" fill="#333" stroke="#2a2a2a" stroke-width="0.9"/>
<text x="713.00" y="383.70" font-size="6.89" fill="#303030" text-anchor="start" textLength="39.17" lengthAdjust="spacingAndGlyphs" font-weight="normal" stroke="#303030" stroke-width="0.12">ext_reset_in</text>
<path d="M704.00 392.30H709.00" stroke="#2a2a2a" stroke-width="1.8"/>
<circle cx="707.30" cy="392.30" r="1.7" fill="#333" stroke="#2a2a2a" stroke-width="0.9"/>
<text x="713.00" y="394.60" font-size="6.89" fill="#303030" text-anchor="start" textLength="40.84" lengthAdjust="spacingAndGlyphs" font-weight="normal" stroke="#303030" stroke-width="0.12">aux_reset_in</text>
<path d="M704.00 403.30H709.00" stroke="#2a2a2a" stroke-width="1.8"/>
<text x="713.00" y="405.60" font-size="6.89" fill="#303030" text-anchor="start" textLength="59.93" lengthAdjust="spacingAndGlyphs" font-weight="normal" stroke="#303030" stroke-width="0.12">mb_debug_sys_rst</text>
<path d="M704.00 414.10H709.00" stroke="#2a2a2a" stroke-width="1.8"/>
<text x="713.00" y="416.40" font-size="6.89" fill="#303030" text-anchor="start" textLength="38.30" lengthAdjust="spacingAndGlyphs" font-weight="normal" stroke="#303030" stroke-width="0.12">dcm_locked</text>
<path d="M871.70 370.70H876.70" stroke="#2a2a2a" stroke-width="1.8"/>
<text x="867.10" y="373.00" font-size="6.89" fill="#303030" text-anchor="end" textLength="30.17" lengthAdjust="spacingAndGlyphs" font-weight="normal" stroke="#303030" stroke-width="0.12">mb_reset</text>
<path d="M871.70 381.40H876.70" stroke="#2a2a2a" stroke-width="2.6"/>
<text x="867.10" y="383.70" font-size="6.89" fill="#303030" text-anchor="end" textLength="68.98" lengthAdjust="spacingAndGlyphs" font-weight="normal" stroke="#303030" stroke-width="0.12">bus_struct_reset[0:0]</text>
<path d="M871.70 392.10H876.70" stroke="#2a2a2a" stroke-width="2.6"/>
<text x="867.10" y="394.40" font-size="6.89" fill="#303030" text-anchor="end" textLength="68.56" lengthAdjust="spacingAndGlyphs" font-weight="normal" stroke="#303030" stroke-width="0.12">peripheral_reset[0:0]</text>
<path d="M871.70 403.30H876.70" stroke="#2a2a2a" stroke-width="2.6"/>
<circle cx="873.90" cy="403.30" r="2.2" fill="#222" stroke="#2a2a2a" stroke-width="0.9"/>
<text x="867.10" y="405.60" font-size="6.89" fill="#303030" text-anchor="end" textLength="84.26" lengthAdjust="spacingAndGlyphs" font-weight="normal" stroke="#303030" stroke-width="0.12">interconnect_aresetn[0:0]</text>
<path d="M871.70 414.10H876.70" stroke="#2a2a2a" stroke-width="2.6"/>
<circle cx="873.90" cy="414.10" r="2.2" fill="#222" stroke="#2a2a2a" stroke-width="0.9"/>
<text x="867.10" y="416.40" font-size="6.89" fill="#303030" text-anchor="end" textLength="76.66" lengthAdjust="spacingAndGlyphs" font-weight="normal" stroke="#303030" stroke-width="0.12">peripheral_aresetn[0:0]</text>
<rect x="29.90" y="101.00" width="52.40" height="107.40" rx="4.5" ry="4.5" fill="#edf4fd" stroke="#6b8cc3" stroke-width="1.1"/>
<text x="27.00" y="154.40" font-size="8.16" fill="#1e1e1e" text-anchor="middle" textLength="31.15" lengthAdjust="spacingAndGlyphs" font-weight="normal" transform="rotate(-90 27.00 154.40)">adder_0</text>
<text x="89.30" y="198.60" font-size="8.16" fill="#4f72b6" text-anchor="start" textLength="87.25" lengthAdjust="spacingAndGlyphs" font-weight="normal" transform="rotate(-90 89.30 198.60)">Adder (Pre-Production)</text>
<path d="M53.20 105.60H59.40M56.30 102.50V108.70" stroke="#3d5e9d" stroke-width="0.95" fill="none"/>
<path d="M52.0 95.8V100.6M59.4 95.8V100.6" stroke="#3f62a6" stroke-width="1.3" opacity="0.9"/><path d="M54.4 95.8V100.6M57.0 95.8V100.6" stroke="#6a88c0" stroke-width="0.9" stroke-dasharray="1.2 0.8"/>
<text x="57.70" y="113.40" font-size="6.89" fill="#303030" text-anchor="end" textLength="16.57" lengthAdjust="spacingAndGlyphs" font-weight="normal" stroke="#303030" stroke-width="0.12" transform="rotate(-90 57.70 113.40)">out_r</text>
<path d="M42.10 203.20H48.30M45.20 200.10V206.30" stroke="#3d5e9d" stroke-width="0.95" fill="none"/>
<path d="M40.9 209.4V214.2M48.3 209.4V214.2" stroke="#3f62a6" stroke-width="1.3" opacity="0.9"/><path d="M43.3 209.4V214.2M45.9 209.4V214.2" stroke="#6a88c0" stroke-width="0.9" stroke-dasharray="1.2 0.8"/>
<text x="46.90" y="196.60" font-size="6.89" fill="#505050" text-anchor="start" textLength="13.40" lengthAdjust="spacingAndGlyphs" font-weight="normal" stroke="#505050" stroke-width="0.12" transform="rotate(-90 46.90 196.60)">in_r</text>
<text x="57.70" y="204.60" font-size="6.89" fill="#303030" text-anchor="start" textLength="20.30" lengthAdjust="spacingAndGlyphs" font-weight="normal" stroke="#303030" stroke-width="0.12" transform="rotate(-90 57.70 204.60)">ap_clk</text>
<text x="69.30" y="204.90" font-size="6.89" fill="#303030" text-anchor="start" textLength="26.50" lengthAdjust="spacingAndGlyphs" font-weight="normal" stroke="#303030" stroke-width="0.12" transform="rotate(-90 69.30 204.90)">ap_rst_n</text>
<path d="M56.3 209.2V214" stroke="#2a2a2a" stroke-width="1.6"/><path d="M67.4 209.2V214" stroke="#2a2a2a" stroke-width="1.6"/><circle cx="67.4" cy="210.9" r="1.5" fill="#555" stroke="#2a2a2a" stroke-width="0.9"/>
<defs><linearGradient id="hg" x1="0" x2="1" y1="0" y2="0"><stop offset="0" stop-color="#8a8a2c"/><stop offset="0.5" stop-color="#e8e8c0"/><stop offset="1" stop-color="#8a8a2c"/></linearGradient><linearGradient id="vg" x1="0" x2="0" y1="0" y2="1"><stop offset="0" stop-color="#8a8a2c"/><stop offset="0.5" stop-color="#d0d090"/><stop offset="1" stop-color="#8a8a2c"/></linearGradient></defs>
<rect x="38.2" y="136.2" width="35" height="34.5" fill="#fff"/>
<rect x="38.2" y="136.2" width="35" height="1.4" fill="url(#hg)"/><rect x="38.2" y="169.3" width="35" height="1.4" fill="url(#hg)"/>
<rect x="38.2" y="136.2" width="1.4" height="34.5" fill="url(#vg)"/><rect x="71.8" y="136.2" width="1.4" height="34.5" fill="url(#vg)"/>
<text x="42.2" y="144" font-size="4.2" fill="#707070" textLength="26" lengthAdjust="spacingAndGlyphs">Vivado HLS</text>
<path d="M51.35 147.05L58.8 151.4L59.45 157.65L52.6 154.2Z" fill="#d4d852"/>
<path d="M52.9 154.6L52.9 161.1L46.05 167.3L46.7 159.5Z" fill="#8a9420"/>
<path d="M53.85 162L60.1 158.9L66.95 161.4L60.1 165.1Z" fill="#e0e492"/>
</svg></body></html>
